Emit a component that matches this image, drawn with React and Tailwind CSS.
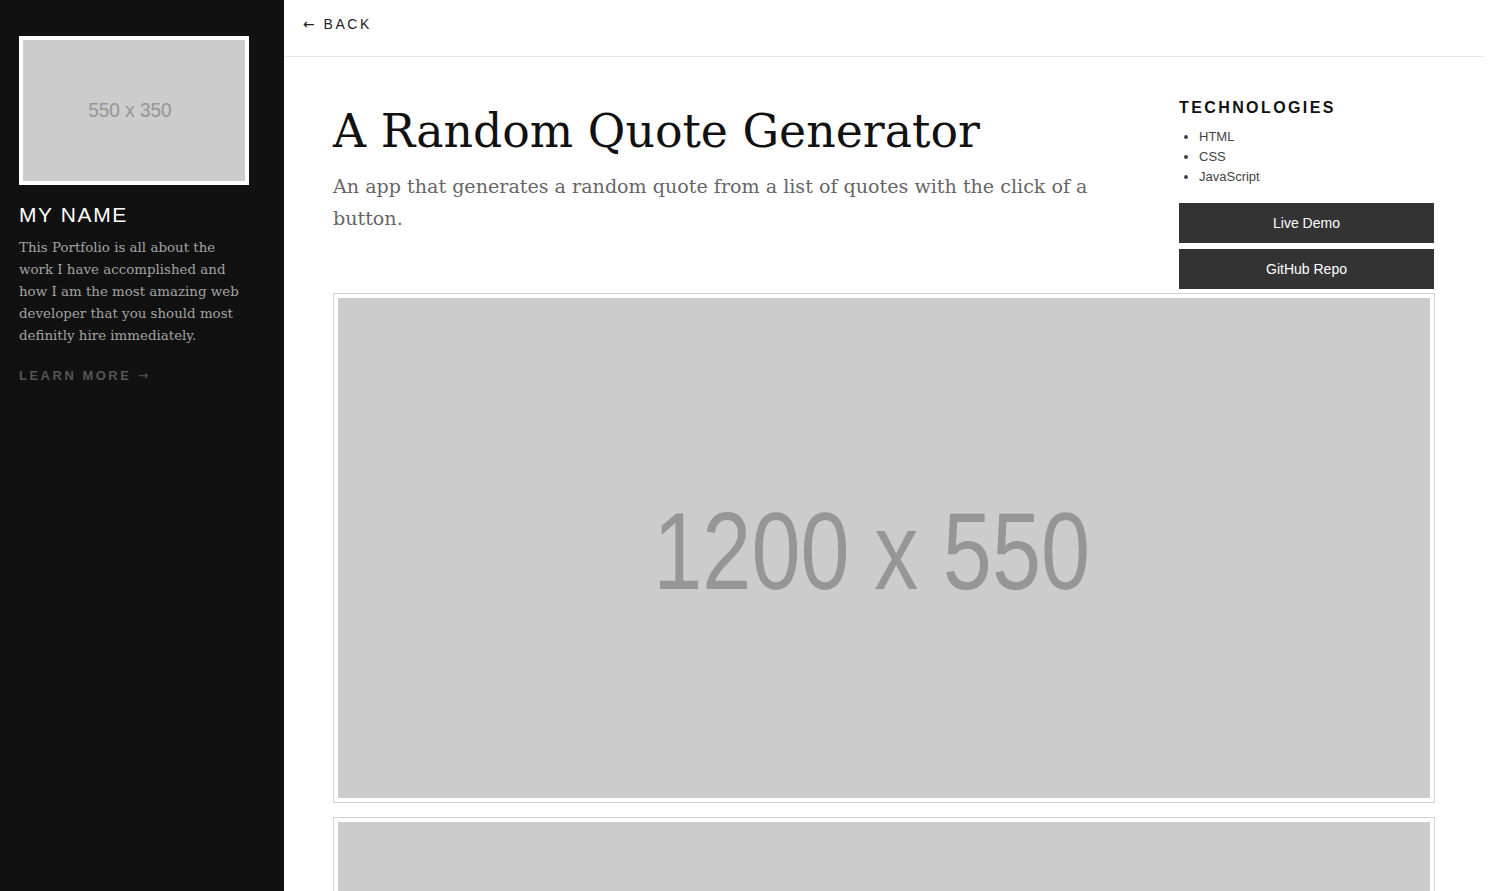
import React from "react";

function Placeholder({ label, size, scale, className, textClass }) {
  return (
    <div className={"flex items-center justify-center bg-[#cccccc] overflow-hidden " + className}>
      <span
        className={"text-[#969696] leading-none whitespace-nowrap " + (textClass || "")}
        style={{ fontFamily: '"Liberation Sans", Arial, sans-serif', fontSize: size, transform: `scaleX(${scale})` }}
      >
        {label}
      </span>
    </div>
  );
}

export default function App() {
  const sans = { fontFamily: '"Liberation Sans", Arial, sans-serif' };
  const serif = { fontFamily: '"DejaVu Serif", "Liberation Serif", serif' };
  const arrow = { fontFamily: '"DejaVu Sans", sans-serif' };
  return (
    <div className="flex w-[1484px] min-h-screen bg-white" style={sans}>
      <aside className="w-[284px] shrink-0 bg-[#111111] px-[19px] pt-[36px]">
        <div className="border-4 border-white w-[230px]">
          <Placeholder label="550 x 350" size={20} scale={0.95} className="h-[141px] pr-[9px]" textClass="-mt-[2px]" />
        </div>
        <h2 className="mt-[17px] text-white text-[21px] leading-[26px] tracking-[1.6px]">MY NAME</h2>
        <p className="mt-[9px] text-[#a3a3a3] text-[13.4px] leading-[22px] w-[230px]" style={serif}>
          This Portfolio is all about the work I have accomplished and how I am the most amazing web developer that you should most definitly hire immediately.
        </p>
        <a className="block mt-[19px] text-[#555555] text-[13px] leading-[20px] tracking-[2.5px] font-semibold">
          LEARN MORE <span style={arrow} className="font-normal">→</span>
        </a>
      </aside>

      <main className="flex-1 min-w-0">
        <header className="h-[57px] border-b border-[#e6e6e6] pl-[19px] pt-[12px]">
          <a className="text-[#222222] text-[14px] leading-[20px] tracking-[2.5px]">
            <span style={arrow}>←</span> BACK
          </a>
        </header>

        <div className="pl-[49px] pr-[49px] pt-[39px]">
          <div className="flex justify-between">
            <div className="w-[790px]">
              <h1 className="mt-[8px] text-[#111111] text-[45.8px] leading-[55px]" style={serif}>
                A Random Quote Generator
              </h1>
              <p className="mt-[12px] text-[#666666] text-[19.1px] leading-[32px]" style={serif}>
                An app that generates a random quote from a list of quotes with the click of a button.
              </p>
            </div>
            <div className="w-[255px] mr-[1px]">
              <h3 className="text-[#111111] text-[16px] leading-[24px] font-bold tracking-[2.4px]">TECHNOLOGIES</h3>
              <ul className="mt-[7px] list-disc pl-[20px] text-[#444444] text-[13px] leading-[20px]">
                <li>HTML</li>
                <li>CSS</li>
                <li>JavaScript</li>
              </ul>
              <div className="mt-[16px] flex flex-col gap-[6px]">
                <a className="h-[40px] flex items-center justify-center bg-[#333333] text-white text-[14px]">Live Demo</a>
                <a className="h-[40px] flex items-center justify-center bg-[#333333] text-white text-[14px]">GitHub Repo</a>
              </div>
            </div>
          </div>

          <div className="mt-[4px] flex flex-col gap-[14px]">
            <div className="border border-[#d2d2d2] p-[4px]">
              <Placeholder label="1200 x 550" size={109} scale={0.81} className="h-[500px] pt-[6px] pr-[24px]" />
            </div>
            <div className="border border-[#d2d2d2] p-[4px]">
              <Placeholder label="1200 x 550" size={109} scale={0.81} className="h-[500px] pt-[6px] pr-[24px]" />
            </div>
          </div>
        </div>
      </main>
    </div>
  );
}
